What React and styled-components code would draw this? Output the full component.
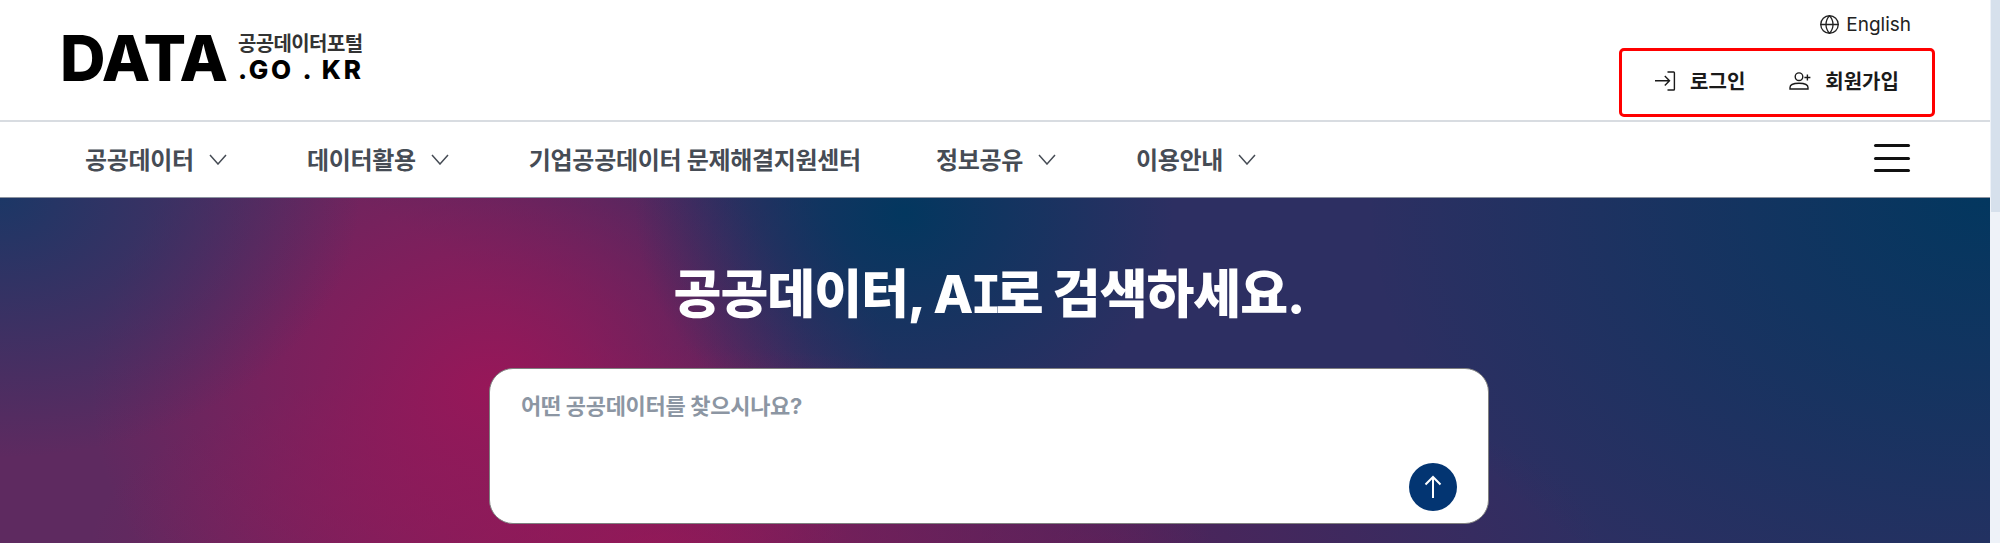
import React from 'react';
import styled, { createGlobalStyle } from 'styled-components';
import { Globe } from 'lucide-react';

const GlobalStyle = createGlobalStyle`
  html, body {
    margin: 0;
    padding: 0;
    height: 100%;
    overflow: hidden;
    background: #fff;
  }
  * {
    box-sizing: border-box;
  }
  body {
    font-family: 'Inter', 'Noto Sans CJK KR', sans-serif;
  }
`;

const Page = styled.div`
  display: flex;
  width: 2000px;
  height: 543px;
`;

const Main = styled.div`
  flex: 1;
  display: flex;
  flex-direction: column;
  min-width: 0;
`;

const Scrollbar = styled.div`
  width: 10px;
  background: #eef2f8;
`;

const ScrollThumb = styled.div`
  height: 212px;
  margin-left: 1px;
  background: #d6e0ec;
`;

const TopBar = styled.header`
  height: 122px;
  display: flex;
  justify-content: space-between;
  border-bottom: 2px solid #d8dce1;
  padding: 0 55px 0 60px;
`;

const Logo = styled.a`
  display: flex;
  align-items: flex-end;
  gap: 11px;
  height: 81px;
  color: #000;
`;

const LogoMain = styled.span`
  font-size: 63px;
  font-weight: 800;
  line-height: 46px;
  letter-spacing: -1px;
`;

const LogoSide = styled.span`
  display: flex;
  flex-direction: column;
  gap: 5px;
`;

const LogoCaption = styled.span`
  font-size: 20px;
  font-weight: 700;
  line-height: 20px;
  color: #333;
  letter-spacing: -0.6px;
`;

const LogoDomain = styled.span`
  font-size: 26px;
  font-weight: 800;
  line-height: 22px;
  letter-spacing: 2.8px;
  white-space: pre;
`;

const Utility = styled.div`
  display: flex;
  flex-direction: column;
  align-items: flex-end;
`;

const LangLink = styled.a`
  display: flex;
  align-items: center;
  gap: 6px;
  height: 48px;
  padding-right: 24px;
  font-size: 19px;
  color: #222;
`;

const AuthBox = styled.div`
  width: 316px;
  height: 69px;
  display: flex;
  align-items: center;
  justify-content: center;
  gap: 44px;
  border: 3px solid #ff0000;
  border-radius: 5px;
`;

const AuthLink = styled.a`
  display: flex;
  align-items: center;
  gap: 14px;
  margin-top: -4px;
  font-size: 20px;
  font-weight: 700;
  color: #1a1a1a;
`;

const NavBar = styled.nav`
  height: 75px;
  display: flex;
  align-items: center;
  justify-content: space-between;
  padding: 0 80px 3px 85px;
`;

const NavList = styled.div`
  display: flex;
  align-items: center;
  gap: 75px;
`;

const NavItem = styled.a`
  display: flex;
  align-items: center;
  gap: 15px;
  font-size: 24px;
  font-weight: 700;
  color: #464c55;
  letter-spacing: -0.3px;
`;

const Chevron = styled.svg`
  width: 18px;
  height: 11px;
  margin: 2px 5px 0 0;
  fill: none;
  stroke: #464c55;
  stroke-width: 1.5;
`;

const Burger = styled.button`
  width: 36px;
  height: 28px;
  padding: 0;
  border: 0;
  background: none;
  display: flex;
  flex-direction: column;
  justify-content: space-between;
`;

const BurgerLine = styled.span`
  height: 3px;
  border-radius: 2px;
  background: #111;
`;

const Hero = styled.section`
  flex: 1;
  display: flex;
  flex-direction: column;
  align-items: center;
  padding: 59px 12px 0 0;
  border-top: 1px solid #8c93a0;
  background:
    radial-gradient(ellipse 270px 230px at 905px 15px, #03375f 0%, rgba(3, 55, 95, 0) 100%),
    radial-gradient(ellipse 620px 460px at 1985px 0px, #03375f 0%, rgba(3, 55, 95, 0) 100%),
    radial-gradient(ellipse 360px 260px at 0px 0px, #1c3766 0%, rgba(28, 55, 102, 0) 100%),
    radial-gradient(ellipse 400px 330px at 490px 190px, #971759 0%, rgba(151, 23, 89, 0) 100%),
    radial-gradient(ellipse 560px 200px at 650px 346px, #8e1a58 0%, rgba(142, 26, 88, 0) 100%),
    radial-gradient(ellipse 500px 170px at 1100px 346px, #50235a 0%, rgba(80, 35, 90, 0) 100%),
    radial-gradient(ellipse 640px 500px at 180px 240px, #5e2a60 55%, rgba(94, 42, 96, 0) 100%),
    #2d2f62;
`;

const Title = styled.h1`
  margin: 0;
  font-size: 52px;
  font-weight: 800;
  line-height: 76px;
  color: #fff;
  letter-spacing: -1px;
`;

// the I in the title has slab serifs in the reference
const SerifI = styled.span`
  font-family: 'DejaVu Sans Mono', monospace;
  font-size: 52px;
  font-weight: 700;
  line-height: 1;
  margin-left: -2px;
  letter-spacing: -6px;
`;

const SearchBox = styled.div`
  position: relative;
  width: 1000px;
  height: 156px;
  margin-top: 35px;
  padding: 22px 31px;
  background: #fff;
  border: 1px solid #808080;
  border-radius: 24px;
`;

const Placeholder = styled.div`
  font-size: 22px;
  font-weight: 700;
  line-height: 30px;
  color: #8c96a3;
  letter-spacing: -0.3px;
`;

const SendButton = styled.button`
  position: absolute;
  right: 31px;
  bottom: 12px;
  width: 48px;
  height: 48px;
  padding: 0;
  border: 0;
  border-radius: 50%;
  display: flex;
  align-items: center;
  justify-content: center;
  background: #033572;
`;

const LoginIcon = () => (
  <svg width="21" height="20" viewBox="0 0 21 20" fill="none" stroke="#1a1a1a" strokeWidth="1.4">
    <path d="M0 9.7H14.5M9.8 5L14.5 9.7L9.8 14.4" />
    <path d="M12.5 1H18.6A.8.8 0 0 1 19.4 1.8V18.2A.8.8 0 0 1 18.6 19H12.5" />
  </svg>
);

const JoinIcon = () => (
  <svg width="22" height="18" viewBox="0 0 22 18" fill="none" stroke="#1a1a1a" strokeWidth="1.4">
    <circle cx="10" cy="4.7" r="3.8" />
    <path d="M1 17V15.6C1 12.6 4.5 11.2 10 11.2C15.5 11.2 19 12.6 19 15.6V17Z" />
    <path d="M18.4 2.5V8.5M15.4 5.5H21.4" />
  </svg>
);

const SendIcon = () => (
  <svg width="20" height="24" viewBox="0 0 20 24" fill="none" stroke="#fff" strokeWidth="2">
    <path d="M10 2V23M2.5 9.5L10 2L17.5 9.5" />
  </svg>
);

const NAV_ITEMS = [
  { label: '공공데이터', menu: true },
  { label: '데이터활용', menu: true },
  { label: '기업공공데이터 문제해결지원센터', menu: false },
  { label: '정보공유', menu: true },
  { label: '이용안내', menu: true },
];

export default function App() {
  return (
    <Page>
      <GlobalStyle />
      <Main>
        <TopBar>
          <Logo>
            <LogoMain>DATA</LogoMain>
            <LogoSide>
              <LogoCaption>공공데이터포털</LogoCaption>
              <LogoDomain>.GO . KR</LogoDomain>
            </LogoSide>
          </Logo>
          <Utility>
            <LangLink>
              <Globe size={21} strokeWidth={1.5} />
              English
            </LangLink>
            <AuthBox>
              <AuthLink>
                <LoginIcon />
                로그인
              </AuthLink>
              <AuthLink>
                <JoinIcon />
                회원가입
              </AuthLink>
            </AuthBox>
          </Utility>
        </TopBar>
        <NavBar>
          <NavList>
            {NAV_ITEMS.map(item => (
              <NavItem key={item.label}>
                {item.label}
                {item.menu && (
                  <Chevron viewBox="0 0 18 11">
                    <path d="M1 1L9 10L17 1" />
                  </Chevron>
                )}
              </NavItem>
            ))}
          </NavList>
          <Burger>
            <BurgerLine />
            <BurgerLine />
            <BurgerLine />
          </Burger>
        </NavBar>
        <Hero>
          <Title>
            공공데이터, A<SerifI>I</SerifI>로 검색하세요.
          </Title>
          <SearchBox>
            <Placeholder>어떤 공공데이터를 찾으시나요?</Placeholder>
            <SendButton>
              <SendIcon />
            </SendButton>
          </SearchBox>
        </Hero>
      </Main>
      <Scrollbar>
        <ScrollThumb />
      </Scrollbar>
    </Page>
  );
}
